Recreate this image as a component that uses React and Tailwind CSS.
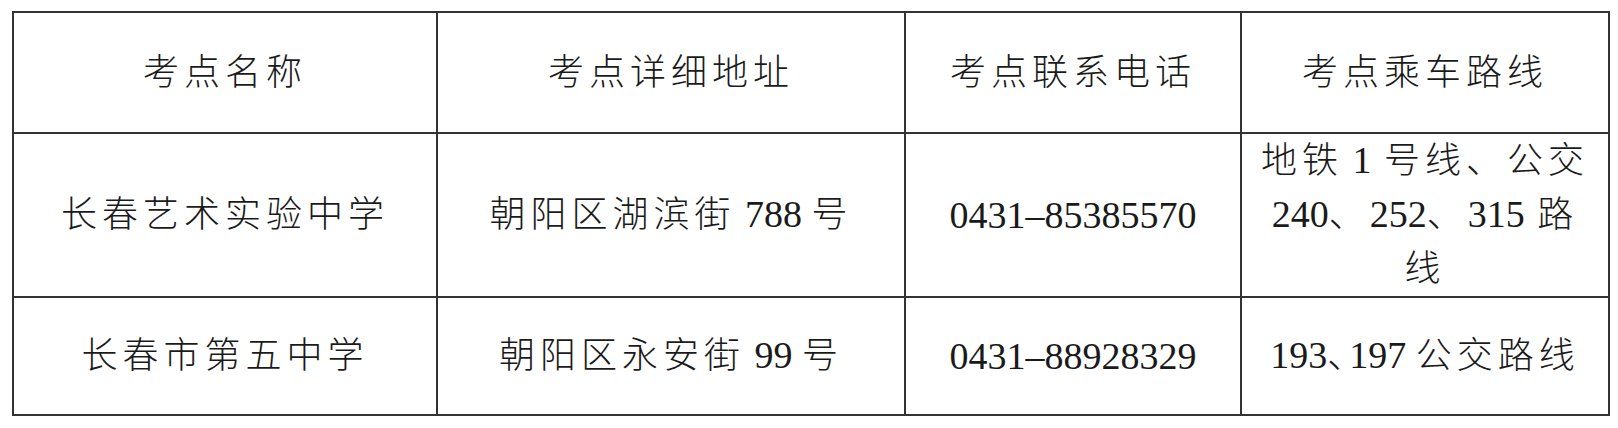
const cjk = "tracking-[5px] text-[36px] font-light";

function Cell({ children, className = "" }) {
  return (
    <td className={`border-2 border-[#333] text-center align-middle p-0 ${className}`}>
      {children}
    </td>
  );
}

export default function App() {
  return (
    <div className="w-[1618px] h-[428px] bg-white pl-[12px] pt-[11px] font-['Liberation_Serif','Noto_Sans_CJK_SC',serif] text-[38px] text-[#1a1a1a] leading-[53px]">
      <table className="w-[1596px] table-fixed border-collapse">
        <colgroup>
          <col className="w-[424px]" />
          <col className="w-[468px]" />
          <col className="w-[336px]" />
          <col className="w-[368px]" />
        </colgroup>
        <tbody>
          <tr className="h-[121px]">
            <Cell><span className={cjk}>考点名称</span></Cell>
            <Cell><span className={cjk}>考点详细地址</span></Cell>
            <Cell><span className={cjk}>考点联系电话</span></Cell>
            <Cell><span className={cjk}>考点乘车路线</span></Cell>
          </tr>
          <tr className="h-[163px]">
            <Cell><span className={cjk}>长春艺术实验中学</span></Cell>
            <Cell>
              <span className={cjk}>朝阳区湖滨街</span> 788 <span className={cjk}>号</span>
            </Cell>
            <Cell>0431–85385570</Cell>
            <Cell>
              <span className={cjk}>地铁</span> 1 <span className={`${cjk} ml-[3px]`}>号线、公交</span>
              <br />
              240<span className={cjk}>、</span>252<span className={cjk}>、</span>315 <span className={`${cjk} ml-[3px]`}>路</span>
              <br />
              <span className={cjk}>线</span>
            </Cell>
          </tr>
          <tr className="h-[118px]">
            <Cell><span className={cjk}>长春市第五中学</span></Cell>
            <Cell>
              <span className={cjk}>朝阳区永安街</span> 99 <span className={cjk}>号</span>
            </Cell>
            <Cell>0431–88928329</Cell>
            <Cell>
              193<span className="text-[36px] font-light [font-feature-settings:'halt'] mr-[4px]">、</span>197 <span className={cjk}>公交路线</span>
            </Cell>
          </tr>
        </tbody>
      </table>
    </div>
  );
}
